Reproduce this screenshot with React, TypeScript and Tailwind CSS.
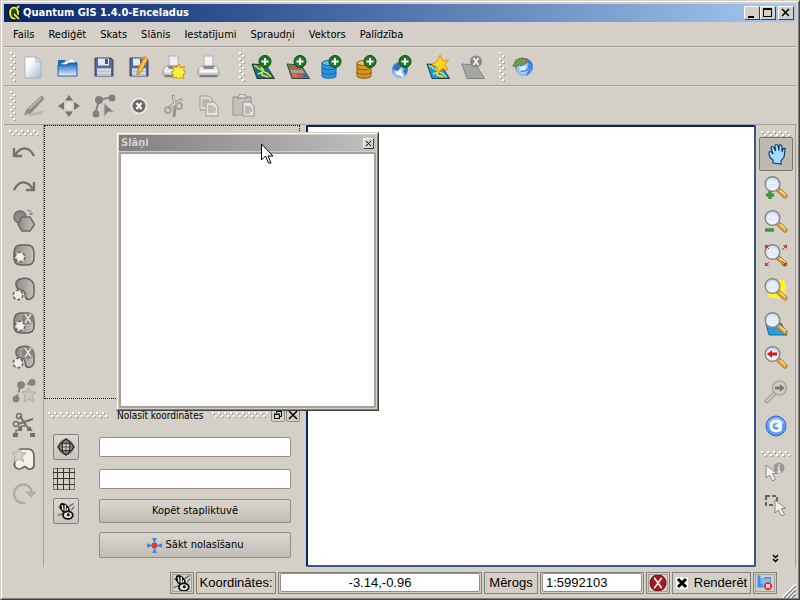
import type { ReactNode } from "react";

type IconProps = { children: ReactNode; size?: number };

const Icon = ({ children, size = 24 }: IconProps) => (
  <svg width={size} height={size} viewBox="0 0 24 24" fill="none" className="shrink-0" aria-hidden="true">
    {children}
  </svg>
);

/* ---------- shared gradients ---------- */

const Gradients = () => (
  <svg width="0" height="0" className="absolute" aria-hidden="true">
    <defs>
      <linearGradient id="paper" x1="0" y1="0" x2="1" y2="1">
        <stop offset="0.3" stopColor="#ffffff" />
        <stop offset="1" stopColor="#a4b8d0" />
      </linearGradient>
      <linearGradient id="folder" x1="0" y1="0" x2="0" y2="1">
        <stop offset="0" stopColor="#1560b8" />
        <stop offset="1" stopColor="#e4f3ff" />
      </linearGradient>
      <linearGradient id="grey" x1="0" y1="0" x2="1" y2="0">
        <stop offset="0" stopColor="#8c8a86" />
        <stop offset="1" stopColor="#c4c1ba" />
      </linearGradient>
      <linearGradient id="lens" x1="0" y1="0" x2="0" y2="1">
        <stop offset="0" stopColor="#c4d8f0" />
        <stop offset="0.5" stopColor="#dce8f6" />
        <stop offset="1" stopColor="#f4f8fc" />
      </linearGradient>
      <radialGradient id="globe" cx="0.45" cy="0.6" r="0.6">
        <stop offset="0" stopColor="#ffffff" />
        <stop offset="0.5" stopColor="#8cc4f8" />
        <stop offset="1" stopColor="#2464d0" />
      </radialGradient>
      <linearGradient id="printer" x1="0" y1="0" x2="0" y2="1">
        <stop offset="0" stopColor="#ffffff" />
        <stop offset="1" stopColor="#b0b0b0" />
      </linearGradient>
    </defs>
  </svg>
);

/* ---------- icon parts ---------- */

const PlusBadge = () => (
  <>
    <circle cx="14" cy="6.500" r="6" fill="#1c7c24" stroke="#0c4812" />
    <path d="M14 3v7M10.500 6.500h7" stroke="#fff" strokeWidth="2" />
  </>
);

const star = "M14 0l2.500 5.500 6-.5-3.500 4.500 3 5.500-6-1.500L12.500 18l-1-6L6 9.500l5-3z";

const Lens = () => (
  <>
    <path d="M14.500 14l6.500 6" stroke="#8a7040" strokeWidth="5" strokeLinecap="round" />
    <path d="M15 14.500l6 5.500" stroke="#f0a020" strokeWidth="3.600" strokeLinecap="round" />
    <path d="M16 14.300l5.500 4.700" stroke="#ffe08c" strokeWidth="1.500" />
    <circle cx="8.500" cy="8" r="7.300" fill="url(#lens)" stroke="#8a8a8a" strokeWidth="1.500" />
    <path d="M3.500 8c0-6 9.500-6 10 0z" fill="#fff" opacity="0.45" />
  </>
);

const Printer = () => (
  <>
    <path d="M7 1h9v10H7z" fill="#eef2f6" stroke="#b4b4b4" />
    <path d="M4 11h15l3 4v5l-2 2H3l-2-2v-5z" fill="url(#printer)" stroke="#a4a4a4" />
    <path d="M5 11h13l-2 3H7z" fill="#8c8c8c" />
    <path d="M3 16.500h17" stroke="#fff" strokeWidth="2" />
    <path d="M3 21h17" stroke="#6c6c6c" strokeWidth="1.500" />
  </>
);

const Floppy = () => (
  <>
    <path d="M3 3h16l2 2v16H3z" fill="#586a9c" stroke="#34436c" />
    <path d="M6 3.500h11v7H6z" fill="#e4eaf4" />
    <path d="M13 4h3v5h-3z" fill="#465888" />
    <path d="M5 13h14v8H5z" fill="#b8c0d0" />
    <path d="M5 15h14M5 18h14" stroke="#e8ecf4" />
  </>
);

const Database = ({ body, line, top }: { body: string; line: string; top: string }) => (
  <>
    <path d="M1 8v13c0 3 14 3 14 0V8z" fill={body} stroke={line} />
    <ellipse cx="8" cy="8" rx="7" ry="2.500" fill={top} stroke={line} />
    <path d="M1 12.500c0 3 14 3 14 0M1 17c0 3 14 3 14 0" stroke={line} />
  </>
);

const vectorMap = (fill: string) => (
  <>
    <path d="M1 9l14 1 8.500 13.500H6z" fill={fill} stroke="#283840" />
    <path d="M3 11c5 0 3 3 6 3s3 4 7 4l4 4M9 10l3 4-1 6 6 2M7 19l5-2" stroke="#d8ec30" strokeWidth="1.500" />
  </>
);

const DashCircle = ({ x, y }: { x: number; y: number }) => (
  <>
    <circle cx={x} cy={y} r="4.500" fill="#f0eee6" stroke="#dedbd2" strokeWidth="1.500" />
    <circle cx={x} cy={y} r="4.800" stroke="#65635d" strokeWidth="1.500" strokeDasharray="3 2" />
  </>
);

const Beetle = () => (
  <>
    <path d="M2 6l4 4M16 6l6-4M1 18l8-3M19 11l4-5" stroke="#555" strokeWidth="1.500" />
    <path d="M5 2c5-3 13 5 12 10l-4 5C6 15 1 6 5 2z" fill="#111" />
    <path d="M7 4l1 7M11 4l0 9M14 8l-1 6" stroke="#eee" strokeWidth="1.800" />
    <ellipse cx="14.500" cy="17.500" rx="6.500" ry="5" fill="#e4e4e4" stroke="#111" strokeWidth="2.500" />
    <circle cx="15" cy="17" r="2" fill="#111" />
  </>
);

const Arrowhead = ({ x, y }: { x: number; y: number }) => (
  <path transform={`translate(${x} ${y})`} d="M0 0v13l3.500-3 3 6 3-1.500-3-6H11z" fill="#f2f0ea" stroke="#8a8883" />
);

/* ---------- toolbar contents ---------- */

type Tool = { label: string; icon: ReactNode };

const fileTools: Tool[] = [
  {
    label: "Jauns projekts",
    icon: (
      <>
        <path d="M3 2h11l5 5v16H3z" fill="url(#paper)" stroke="#a8b4c4" />
        <path d="M14 2v5h5z" fill="#dce6f2" stroke="#a8b4c4" />
      </>
    ),
  },
  {
    label: "Atvērt projektu",
    icon: (
      <>
        <path d="M1 5h7l2 2h10v14H1z" fill="#1c68c0" />
        <path d="M4 9l12-6 4 8z" fill="#fff" stroke="#a8c4e4" />
        <path d="M1 10h8l3-2h8v13H1z" fill="url(#folder)" stroke="#2060a8" />
      </>
    ),
  },
  { label: "Saglabāt projektu", icon: <Floppy /> },
  {
    label: "Saglabāt kā",
    icon: (
      <>
        <Floppy />
        <path d="M10 20l1-6 6-12 4 2-7 13z" fill="#f8b020" stroke="#c88410" />
        <path d="M13 16l6-12" stroke="#ffe080" />
        <path d="M17 1.500l3.500 2" stroke="#e89080" strokeWidth="2" />
      </>
    ),
  },
  {
    label: "Jauna izdruka",
    icon: (
      <>
        <Printer />
        <path d="M17 9l1.500 4 4-1.500-1 4 2.500 2-3 2 1 4-4-1-2 2.500-1.500-3-4 1 1-4-2.500-2 3-1.500-1-4 4 1z" fill="#fff040" stroke="#e08c10" />
      </>
    ),
  },
  { label: "Drukāt", icon: <Printer /> },
];

const layerTools: Tool[] = [
  { label: "Pievienot vektoru slāni", icon: <>{vectorMap("#1c6c90")}<PlusBadge /></> },
  {
    label: "Pievienot rastra slāni",
    icon: (
      <>
        <path d="M1 9l14 1 8.500 13.500H6z" fill="#8c7858" stroke="#404030" />
        <path d="M6 10l6 12h4L11 10z" fill="#e04468" />
        <path d="M4 15h13l1 3H6z" fill="#a8a090" />
        <path d="M2 10h4l1 3H3z" fill="#58883c" />
        <path d="M16 19h5l2 3h-5z" fill="#3868a0" />
        <path d="M6 19h4l2 3H7z" fill="#d07840" />
        <PlusBadge />
      </>
    ),
  },
  { label: "Pievienot PostGIS slāni", icon: <><Database body="#2c94dc" line="#1468a4" top="#6cc0f4" /><PlusBadge /></> },
  { label: "Pievienot SpatiaLite slāni", icon: <><Database body="#d89420" line="#8c5c10" top="#f0c060" /><PlusBadge /></> },
  {
    label: "Pievienot WMS slāni",
    icon: (
      <>
        <circle cx="9" cy="15" r="8" fill="url(#globe)" />
        <path d="M2 12l5-4 3 4-3 4-4-1zM13 14l3-1-1 6-3-2z" fill="#3474b4" />
        <path d="M5 18l5 1 2 3" stroke="#fff" strokeWidth="2" />
        <PlusBadge />
      </>
    ),
  },
  { label: "Jauns vektoru slānis", icon: <>{vectorMap("#1c98e0")}<path d={star} fill="#ffd820" stroke="#f08c10" /></> },
  {
    label: "Noņemt slāni",
    icon: (
      <>
        <path d="M1 9l14 1 8.500 13.500H6z" fill="#a8a6a0" stroke="#84827c" />
        <circle cx="15" cy="6.500" r="6" fill="#888" />
        <path d="M12.500 3l5 7M17.500 3l-5 7" stroke="#eee" strokeWidth="2" />
      </>
    ),
  },
];

const webTools: Tool[] = [
  {
    label: "QGIS mājas lapa",
    icon: (
      <>
        <circle cx="13" cy="12" r="9" fill="url(#globe)" />
        <path d="M16 5c4 4 4 9 0 15M10 16c4 1 7-1 8-5" stroke="#3c84e0" strokeWidth="1.500" />
        <path d="M2 11l3-6 5-2 6 1-1 4-4 3-3-1-3 2z" fill="#6c9c50" stroke="#805028" strokeDasharray="2 1" />
      </>
    ),
  },
];

const editTools: Tool[] = [
  {
    label: "Rediģēt",
    icon: (
      <>
        <path d="M7 21l14-3" stroke="#bcb9b2" strokeWidth="3" />
        <path d="M2 21l3-6L18 3c2-2 5 0 3 3L9 19z" fill="#8c8a84" stroke="#a4a29c" />
        <path d="M7 15L19 4" stroke="#b4b2ac" strokeWidth="2" />
      </>
    ),
  },
  {
    label: "Pārvietot",
    icon: (
      <>
        <path d="M12 1l4 5.500H8zM12 23l4-5.500H8zM1 12l6-4v8zM23 12l-6-4v8z" fill="#74726d" />
        <circle cx="12" cy="12" r="3.500" fill="#e4e2db" />
      </>
    ),
  },
  {
    label: "Virsotnes",
    icon: (
      <>
        <path d="M3 21L7 6l13-3" stroke="#817f7a" strokeWidth="2" />
        <circle cx="7" cy="6" r="4" fill="#817f7a" />
        <circle cx="20" cy="4" r="3.500" fill="#817f7a" />
        <circle cx="4" cy="20" r="3.500" fill="#817f7a" />
        <path d="M12 9v14l4-5h6z" fill="#817f7a" stroke="#c4c1ba" />
      </>
    ),
  },
  {
    label: "Dzēst izvēlēto",
    icon: (
      <>
        <circle cx="12" cy="12" r="8.500" fill="#e8e6df" />
        <circle cx="12" cy="12" r="6.500" fill="#6c6a66" />
        <path d="M9.500 9l5 6M14.500 9l-5 6" stroke="#fff" strokeWidth="2.200" />
      </>
    ),
  },
  {
    label: "Izgriezt",
    icon: (
      <>
        <path d="M11 1l2 12-1 10M20 5L6 14" stroke="#97958f" strokeWidth="3" />
        <path d="M11.500 2l1.500 10M19 6L8 13" stroke="#d4d1ca" strokeWidth="1.500" />
        <circle cx="17" cy="12" r="3" stroke="#a5a39d" strokeWidth="2" />
        <circle cx="6" cy="16" r="3" stroke="#a5a39d" strokeWidth="2" />
      </>
    ),
  },
  {
    label: "Kopēt",
    icon: (
      <>
        <path d="M3 2h9l3 3v11H3z" fill="#dedbd4" stroke="#9c9a94" />
        <path d="M5 6h7M5 8h8M5 10h8M5 12h6" stroke="#9c9a94" />
        <path d="M9 8h8l4 4v10H9z" fill="#e6e3dc" stroke="#9c9a94" />
        <path d="M11 12h5M11 14h8M11 16h8M11 18h7" stroke="#9c9a94" />
      </>
    ),
  },
  {
    label: "Ielīmēt",
    icon: (
      <>
        <path d="M1 3h18v18H1z" fill="#c4c1ba" stroke="#94928c" />
        <path d="M5 4c0-2 3-2 3-4h4c0 2 3 2 3 4z" fill="#ddd" stroke="#888680" />
        <path d="M11 8h7l4 4v10H11z" fill="#e8e5de" stroke="#94928c" />
        <path d="M13 13h6M13 15h7M13 17h7M13 19h5" stroke="#94928c" />
      </>
    ),
  },
];

const cell = "M9 2h6c5 0 7 3 7 8v5c0 5-2 7-7 7H9c-5 0-7-2-7-7v-5c0-5 2-8 7-8z";
const bean = "M8 2c8-2 14 1 14 8v6c0 6-6 8-8 5s1-7-5-8C3 12 2 4 8 2z";

const geometryTools: Tool[] = [
  { label: "Atcelt", icon: <path d="M2 7v8h8M3 14C9 5 17 5 22 15" stroke="#73716c" strokeWidth="2.300" /> },
  { label: "Atkārtot", icon: <path d="M22 7v8h-8M21 14C15 5 7 5 2 15" stroke="#73716c" strokeWidth="2.300" /> },
  {
    label: "Vienkāršot objektu",
    icon: (
      <>
        <circle cx="8" cy="8" r="6" fill="#8c8a85" stroke="#6c6a65" strokeWidth="1.500" />
        <path d="M10 8h8l4.500 7.500L18 22h-8l-4-6.500z" fill="url(#grey)" stroke="#6c6a65" strokeWidth="1.500" />
        <path d="M15 1l4 1v4M17 4l2 2 2-2" stroke="#84827d" />
      </>
    ),
  },
  { label: "Pievienot caurumu", icon: <><path d={cell} fill="url(#grey)" stroke="#65635d" strokeWidth="1.500" /><DashCircle x={8} y={14} /></> },
  { label: "Pievienot daļu", icon: <><path d={bean} fill="url(#grey)" stroke="#65635d" strokeWidth="1.500" /><DashCircle x={6} y={18} /></> },
  {
    label: "Dzēst caurumu",
    icon: (
      <>
        <path d={cell} fill="url(#grey)" stroke="#65635d" strokeWidth="1.500" />
        <DashCircle x={8} y={15} />
        <circle cx="16" cy="7.500" r="6" fill="#85837e" />
        <path d="M13 3l6 9M19 3l-6 9" stroke="#e4e2db" strokeWidth="1.500" />
      </>
    ),
  },
  {
    label: "Dzēst daļu",
    icon: (
      <>
        <path d={bean} fill="url(#grey)" stroke="#65635d" strokeWidth="1.500" />
        <DashCircle x={6} y={18} />
        <circle cx="16" cy="8" r="6" fill="#85837e" />
        <path d="M13 3l6 9M19 3l-6 9" stroke="#e4e2db" strokeWidth="1.500" />
      </>
    ),
  },
  {
    label: "Pārveidot objektu",
    icon: (
      <>
        <path d="M4 20L9 6l11-2" stroke="#85837e" strokeWidth="2" strokeDasharray="5 2" />
        <circle cx="9" cy="6" r="3.800" fill="#85837e" />
        <circle cx="20" cy="3.500" r="3.500" fill="#85837e" />
        <circle cx="4" cy="20" r="3.500" fill="#85837e" />
        <path d="M17 8l2 5h5l-4 3.500 2 6.500-5-3-5 3 1-6.500-3-3.500 5-.5z" fill="#cbc8c0" stroke="#b0ada6" />
      </>
    ),
  },
  {
    label: "Sadalīt objektu",
    icon: (
      <>
        <path d="M3 22c1-6 4-9 9-9s8 3 9 9" stroke="#85837e" strokeWidth="2" strokeDasharray="6 3" />
        <path d="M6 11l15-5M8 3l7 11" stroke="#73716c" strokeWidth="2" />
        <circle cx="7" cy="3" r="2.500" stroke="#73716c" strokeWidth="1.500" />
        <circle cx="4" cy="11" r="2.500" stroke="#73716c" strokeWidth="1.500" />
        <path d="M1 20h5v4H1zM18 20h5v4h-5zM6 14h4v4H6zM15 14h4v4h-4z" fill="#73716c" />
      </>
    ),
  },
  {
    label: "Apvienot objektus",
    icon: (
      <>
        <path d="M8 2h8c4 0 6 3 6 8v8c0 5-6 5-8 2-2-2-3 2-6 2-6 0-7-5-4-9z" fill="#f2efe6" stroke="#65635d" strokeWidth="1.700" />
        <path d="M7 1l2 5h5l-4 3 2 6-5-3-5 3 1-6-3-3 5-1z" fill="#d4d0c8" stroke="#b0ada6" />
      </>
    ),
  },
  {
    label: "Pagriezt simbolus",
    icon: (
      <>
        <path d="M13 22C5 23 2 17 2 12 3 2 18 0 20 11" stroke="#aaa8a1" strokeWidth="2.200" />
        <path d="M14 11h10l-5 5z" fill="#b4b1aa" stroke="#aaa8a1" />
      </>
    ),
  },
];

const zoomTools: Tool[] = [
  {
    label: "Pārbīdīt karti",
    icon: (
      <path
        d="M9 21v-3c-2-1-4-4-4-7 0-2 2-2 3 0l1 1-2-6c0-2 2-2 3 0l1.500 3L11 4c0-2 3-2 3 0l1 4.500V4c1-2 3-1 3 1v5l1-3c1-1 3-1 2 1l-1 7-3 4v3z"
        fill="#a4dcff"
        stroke="#103c6c"
        strokeWidth="1.200"
      />
    ),
  },
  { label: "Tuvināt", icon: <><Lens /><path d="M6 15v8M2 19h8" stroke="#38983c" strokeWidth="3.500" /></> },
  { label: "Tālināt", icon: <><Lens /><path d="M1 20h9" stroke="#38983c" strokeWidth="3.500" /></> },
  {
    label: "Rādīt visu",
    icon: (
      <>
        <Lens />
        <path d="M1 1h4L1 5zM23 1v4l-4-4zM1 22v-4l4 4zM22 22h-4l4-4z" fill="#dc2838" />
        <path d="M2 2l3 3M22 2l-4 4M2 21l3-3M22 21l-4-4" stroke="#dc2838" />
      </>
    ),
  },
  {
    label: "Tuvināt izvēlēto",
    icon: <><path d="M6 3l14-1 2 5-1 11-6 3-11-2z" fill="#fff32c" /><Lens /></>,
  },
  {
    label: "Tuvināt slāni",
    icon: <><path d="M2 12l15-1 6 12H5z" fill="#2c9cdc" stroke="#186ca0" /><Lens /></>,
  },
  {
    label: "Iepriekšējais tuvinājums",
    icon: <><Lens /><path d="M3 8l5-4v2.500h5v3H8V12z" fill="#e01818" /></>,
  },
  {
    label: "Nākamais tuvinājums",
    icon: (
      <>
        <path d="M10 14l-7 7" stroke="#989690" strokeWidth="4.500" strokeLinecap="round" />
        <path d="M10 14l-7 7" stroke="#c8c5be" strokeWidth="2.500" strokeLinecap="round" />
        <circle cx="15.500" cy="8" r="7" fill="#d0cdc6" stroke="#a8a69f" strokeWidth="1.500" />
        <path d="M20.500 8l-4.500-4v2.500h-5v3h5V12z" fill="#7c7a75" />
      </>
    ),
  },
  {
    label: "Atsvaidzināt",
    icon: (
      <>
        <circle cx="12" cy="12" r="10" fill="#5c98ec" stroke="#3068c8" />
        <path d="M3 10c3-9 15-9 18 0z" fill="#a4c8f8" opacity="0.6" />
        <path d="M16 8c-4-2-9-1-9 4s5 6 9 4v-3" stroke="#fff" strokeWidth="3" />
        <path d="M10 12l8-5v8z" fill="#fff" />
      </>
    ),
  },
];

const attributeTools: Tool[] = [
  {
    label: "Identificēt objektus",
    icon: (
      <>
        <circle cx="15" cy="7" r="5.500" fill="#9c9a95" />
        <path d="M15 3v1.500M13.500 6.500H15V11M13 11h4" stroke="#e8e6e0" strokeWidth="1.500" />
        <Arrowhead x={2} y={4} />
      </>
    ),
  },
  {
    label: "Izvēlēties objektus",
    icon: (
      <>
        <rect x="2" y="3" width="11" height="9" stroke="#65635d" strokeWidth="2" strokeDasharray="4 2" />
        <Arrowhead x={11} y={7} />
      </>
    ),
  },
];

/* ---------- widgets ---------- */

const Grip = ({ className = "" }: { className?: string }) => (
  <svg className={className} aria-hidden="true">
    <defs>
      <pattern id="grip" width="6" height="6" patternUnits="userSpaceOnUse">
        <path d="M1 1h2v2H1zM4 4h2v2H4z" fill="#aaa69e" />
        <path d="M0 0h2v2H0zM3 3h2v2H3z" fill="#fff" />
      </pattern>
    </defs>
    <rect width="100%" height="100%" fill="url(#grip)" />
  </svg>
);

const ToolButton = ({ tool, className }: { tool: Tool; className: string }) => (
  <button type="button" aria-label={tool.label} className={`flex shrink-0 items-center justify-center ${className}`}>
    <Icon>{tool.icon}</Icon>
  </button>
);

const ToolRow = ({ tools }: { tools: Tool[] }) => (
  <div className="flex items-center">
    <Grip className="h-[30px] w-[6px]" />
    <div className="flex">
      {tools.map((tool) => (
        <ToolButton key={tool.label} tool={tool} className="h-[34px] w-[35px]" />
      ))}
    </div>
  </div>
);

const captionButton =
  "flex h-[14px] w-[16px] items-center justify-center border border-t-white border-l-white border-r-[#404040] border-b-[#404040] bg-[#d4d0c8]";
const pushButton =
  "flex items-center justify-center gap-1 rounded-[2px] border border-[#918e86] bg-linear-to-b from-[#dad7d0] to-[#c2beb6] text-[11px]";
const squareButton =
  "flex h-[26px] w-[26px] items-center justify-center rounded-[2px] border border-[#85827a] bg-linear-to-b from-[#dad7d0] to-[#cac6be]";
const statusCell = "flex h-[22px] shrink-0 items-center justify-center border border-[#85827a]";

const menus = ["Fails", "Rediģēt", "Skats", "Slānis", "Iestatījumi", "Spraudņi", "Vektors", "Palīdzība"];

const TitleBar = () => (
  <header className="flex h-[18px] items-center bg-linear-to-r from-[#0a246a] to-[#a6caf0] px-[2px]">
    <svg width="16" height="16" viewBox="0 0 16 16" aria-hidden="true">
      <ellipse cx="8" cy="8" rx="4" ry="5.500" fill="none" stroke="#111" strokeWidth="5" />
      <ellipse cx="8" cy="8" rx="4" ry="5.500" fill="#284c28" stroke="#e8e840" strokeWidth="2" />
      <path d="M8 9l5 5" stroke="#111" strokeWidth="4" />
      <path d="M8 9l5 5M11 3l2-2" stroke="#d8e838" strokeWidth="2" />
    </svg>
    <h1 className="ml-px flex-1 text-[11px] font-bold text-white">Quantum GIS 1.4.0-Enceladus</h1>
    <div className="flex">
      <button type="button" aria-label="Minimizēt" className={captionButton}>
        <svg width="10" height="10"><path d="M1 8h6v2H1z" /></svg>
      </button>
      <button type="button" aria-label="Maksimizēt" className={captionButton}>
        <svg width="10" height="10"><path d="M0 0h9v9H0zM1 2v6h7V2z" fillRule="evenodd" /></svg>
      </button>
      <button type="button" aria-label="Aizvērt" className={`ml-[2px] ${captionButton}`}>
        <svg width="10" height="10"><path d="M1 1l7 7M8 1L1 8" stroke="#000" strokeWidth="1.600" /></svg>
      </button>
    </div>
  </header>
);

const LayersWindow = () => (
  <section className="absolute top-[7px] left-[72px] flex h-[279px] w-[263px] flex-col border border-t-[#d4d0c8] border-l-[#d4d0c8] border-r-[#404040] border-b-[#404040] bg-[#d4d0c8]">
    <div className="flex flex-1 flex-col border border-t-white border-l-white border-r-[#808080] border-b-[#808080] p-px">
      <div className="flex h-[16px] items-center justify-between bg-linear-to-r from-[#808080] to-[#c0c0c0] px-[2px]">
        <h2 className="text-[11px] font-bold text-[#d4d0c8]">Slāņi</h2>
        <button type="button" aria-label="Aizvērt slāņus" className="flex h-[11px] w-[11px] items-center justify-center border border-t-white border-l-white border-r-[#404040] border-b-[#404040] bg-[#d4d0c8]">
          <svg width="7" height="7" className="shrink-0"><path d="M1 1l5 5M6 1L1 6" stroke="#000" /></svg>
        </button>
      </div>
      <div className="mt-px flex-1 rounded-[2px] border-2 border-[#a5a199] bg-white" />
    </div>
  </section>
);

const CoordinateCapture = () => (
  <section className="pb-[9px]">
    <div className="flex h-[14px] items-center gap-[9px] pl-1">
      <Grip className="h-[6px] w-[60px]" />
      <h2 className="text-[10px]">Nolasīt koordinātes</h2>
      <div className="flex min-w-0 flex-1 items-center gap-[3px]">
        <Grip className="h-[6px] min-w-0 flex-1" />
        <div className="flex gap-px">
          <button type="button" aria-label="Atdalīt" className="flex h-[14px] w-[14px] items-center justify-center rounded-[2px] border border-[#918e86]">
            <svg width="10" height="10" className="shrink-0"><path d="M3.500 3V1.500h5v5H7M1.500 4.500h5v4h-5zM3 1.500h6M1 4h6" stroke="#000" fill="none" /></svg>
          </button>
          <button type="button" aria-label="Aizvērt" className="flex h-[14px] w-[14px] items-center justify-center rounded-[2px] border border-[#918e86]">
            <svg width="10" height="10" className="shrink-0"><path d="M1 1l8 8M9 1L1 9" stroke="#000" strokeWidth="1.500" /></svg>
          </button>
        </div>
      </div>
    </div>
    <div className="mt-[12px] grid grid-cols-[26px_1fr] items-center gap-x-5 gap-y-[8px] px-[9px]">
      <button type="button" aria-label="Koordinātu sistēma" className={squareButton}>
        <Icon size={18}>
          <circle cx="12" cy="12" r="10" fill="#888" stroke="#555" />
          <path d="M12 1L1 12l11 11 11-11z" fill="#aaa" stroke="#222" strokeWidth="1.500" />
          <rect x="7" y="7" width="10" height="10" fill="#ccc" stroke="#222" strokeWidth="1.500" />
          <path d="M12 2v20M2 12h20" stroke="#333" />
        </Icon>
      </button>
      <input aria-label="Koordinātes izvēlētajā sistēmā" className="h-[20px] w-full rounded-[2px] border border-[#918e86] bg-white px-1 text-[11px]" />
      <svg width="22" height="22" viewBox="0 0 22 22" aria-hidden="true">
        <path d="M0.500 0.500h21v21h-21z" fill="none" stroke="#77746d" />
        <path d="M4.500 0v22M10.500 0v22M16.500 0v22M0 4.500h22M0 10.500h22M0 16.500h22" stroke="#333" />
      </svg>
      <input aria-label="Kartes koordinātes" className="h-[20px] w-full rounded-[2px] border border-[#918e86] bg-white px-1 text-[11px]" />
      <button type="button" aria-label="Sekot pelei" className={squareButton}>
        <Icon size={18}><Beetle /></Icon>
      </button>
      <button type="button" className={`h-[24px] ${pushButton}`}>Kopēt stapliktuvē</button>
      <button type="button" className={`col-start-2 h-[26px] ${pushButton}`}>
        <Icon size={15}>
          <path d="M12 0v24M0 12h24" stroke="#3c8cd0" strokeWidth="3" />
          <path d="M8 0l4 7 4-7zM8 24l4-7 4 7zM0 8l7 4-7 4zM24 8l-7 4 7 4z" fill="#3c8cd0" />
          <rect x="8" y="8" width="8" height="8" fill="#e03838" />
        </Icon>
        Sākt nolasīšanu
      </button>
    </div>
  </section>
);

const StatusBar = () => (
  <footer className="flex h-[31px] items-center justify-end gap-[2px] pl-2 font-['Liberation_Sans',sans-serif] text-[13px]">
    <button type="button" aria-label="Pārslēgt koordinātes" className={`w-[24px] ${statusCell} outline -outline-offset-3 outline-[#a5a199]`}>
      <Icon size={18}><Beetle /></Icon>
    </button>
    <label htmlFor="coords" className={`w-[80px] ${statusCell}`}>Koordinātes:</label>
    <div className={`w-[204px] ${statusCell}`}>
      <input id="coords" defaultValue="-3.14,-0.96" className="h-[19px] w-[200px] rounded-[2px] border border-[#918e86] bg-white text-center" />
    </div>
    <label htmlFor="scale" className={`w-[54px] ${statusCell}`}>Mērogs</label>
    <div className={`w-[104px] ${statusCell}`}>
      <input id="scale" defaultValue="1:5992103" className="h-[19px] w-[100px] rounded-[2px] border border-[#918e86] bg-white px-[3px]" />
    </div>
    <button type="button" aria-label="Apturēt" className={`w-[24px] ${statusCell} outline -outline-offset-3 outline-[#a5a199]`}>
      <Icon size={18}>
        <circle cx="12" cy="12" r="10.500" fill="#a81820" stroke="#601014" strokeWidth="1.500" />
        <path d="M7 5l10 14M17 5L7 19" stroke="#fff" strokeWidth="2" />
      </Icon>
    </button>
    <label className={`w-[79px] gap-[6px] ${statusCell}`}>
      <span className="grid h-[12px] w-[12px]">
        <input type="checkbox" defaultChecked className="peer col-start-1 row-start-1 h-[12px] w-[12px] appearance-none bg-white" />
        <svg viewBox="0 0 12 12" className="pointer-events-none invisible col-start-1 row-start-1 peer-checked:visible">
          <path d="M2 2l8 8M10 2l-8 8" stroke="#000" strokeWidth="3" />
        </svg>
      </span>
      Renderēt
    </label>
    <button type="button" aria-label="Projekcija" className={`w-[24px] ${statusCell} outline -outline-offset-3 outline-[#a5a199]`}>
      <Icon size={18}>
        <path d="M2 2h4v4h5V4h9v14H2z" fill="#3c94e4" />
        <path d="M6 6h13v7H6z" fill="#78b8f4" />
        <circle cx="16" cy="16" r="6" fill="#d02830" stroke="#f0d0d0" />
        <path d="M13.500 13.500l5 5M18.500 13.500l-5 5" stroke="#fff" strokeWidth="2" />
      </Icon>
    </button>
    <svg width="17" height="14" className="self-end" aria-hidden="true">
      <path d="M4 14L17 1M8 14l9-9M12 14l5-5" stroke="#fff" strokeWidth="3" />
      <path d="M5 14L17 2M9 14l8-8M13 14l4-4" stroke="#808080" strokeWidth="1.500" />
    </svg>
  </footer>
);

export default function App() {
  return (
    <div className="flex min-h-screen flex-col border border-t-[#d4d0c8] border-l-[#d4d0c8] border-r-[#404040] border-b-[#404040] bg-[#d4d0c8] font-['DejaVu_Sans_Condensed','DejaVu_Sans',sans-serif] text-[11px] text-black">
      <Gradients />
      <div className="flex flex-1 flex-col border border-t-white border-l-white border-r-[#808080] border-b-[#808080] px-[2px] pt-[2px]">
        <TitleBar />

        <nav className="flex h-[25px] items-center gap-[14px] border-b border-[#a5a199] px-[9px] pt-[2px]">
          {menus.map((menu) => (
            <button key={menu} type="button">{menu}</button>
          ))}
        </nav>

        <div className="flex h-[39px] items-center justify-start gap-[13px] border-t border-b border-t-[#dedbd5] border-b-[#a5a199] pl-[6px]">
          <ToolRow tools={fileTools} />
          <div className="flex gap-[9px]">
            <ToolRow tools={layerTools} />
            <ToolRow tools={webTools} />
          </div>
        </div>
        <div className="flex h-[39px] items-center border-t border-b border-t-[#dedbd5] border-b-[#a5a199] pl-[6px]">
          <ToolRow tools={editTools} />
        </div>

        <main className="flex flex-1">
          <aside className="flex w-[40px] shrink-0 flex-col items-center border-r border-[#a5a199] pt-[5px]">
            <Grip className="h-[6px] w-[30px] shrink-0" />
            {geometryTools.map((tool) => (
              <ToolButton key={tool.label} tool={tool} className="h-[34px] w-[34px]" />
            ))}
          </aside>

          <div className="relative flex min-w-0 flex-1">
            <div className="mr-[6px] flex w-[256px] shrink-0 flex-col">
              <div className="mb-[9px] flex-1 border border-dotted border-black" />
              <CoordinateCapture />
            </div>
            <div className="min-w-0 flex-1 rounded-[2px] border-2 border-t-[#0a246a] border-r-[#3a5592] border-b-[#3a5592] border-l-[#0a246a] bg-white" />
            <LayersWindow />
            <svg width="13" height="22" viewBox="0 0 13 22" className="absolute top-[18px] left-[217px]" aria-hidden="true">
              <path d="M.5 1v16l4-4 3 7h2.500l-3-7H12z" fill="#fff" stroke="#000" />
            </svg>
          </div>

          <aside className="flex w-[40px] shrink-0 flex-col items-center border-r border-[#a5a199] pt-[6px]">
            <Grip className="h-[6px] w-[30px] shrink-0" />
            {zoomTools.map((tool, i) => (
              <ToolButton
                key={tool.label}
                tool={tool}
                className={i === 0 ? "h-[34px] w-[34px] rounded-[2px] border border-[#76736c] bg-[#bebab1]" : "h-[34px] w-[34px]"}
              />
            ))}
            <Grip className="mt-2 h-[6px] w-[30px] shrink-0" />
            {attributeTools.map((tool) => (
              <ToolButton key={tool.label} tool={tool} className="h-[32px] w-[34px]" />
            ))}
            <button type="button" aria-label="Vairāk" className="mt-auto mb-1">
              <svg width="7" height="9"><path d="M1 1l2.500 2.500L6 1M1 5l2.500 2.500L6 5" stroke="#000" strokeWidth="1.500" fill="none" /></svg>
            </button>
          </aside>
        </main>

        <StatusBar />
      </div>
    </div>
  );
}
